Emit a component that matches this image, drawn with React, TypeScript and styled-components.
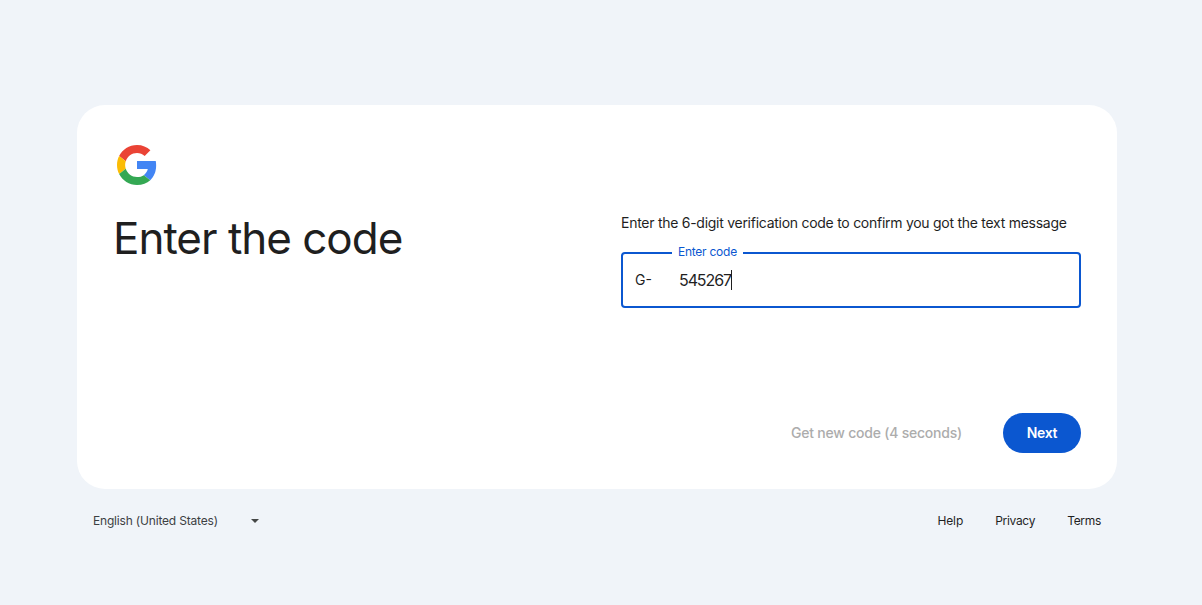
import { useState } from 'react';
import styled, { createGlobalStyle } from 'styled-components';

const GlobalStyle = createGlobalStyle`
  * {
    box-sizing: border-box;
  }

  body {
    margin: 0;
    background: #f0f4f9;
    color: #1f1f1f;
    font-family: Inter, Roboto, sans-serif;
  }
`;

const Page = styled.div({
  display: 'flex',
  flexDirection: 'column',
  width: 1040,
  minHeight: 605,
  marginLeft: 77,
  paddingTop: 105,
});

const Card = styled.main({
  display: 'flex',
  flexDirection: 'column',
  height: 384,
  padding: 36,
  borderRadius: 28,
  background: '#fff',
});

const Logo = styled.svg({
  display: 'block',
  width: 40,
  height: 40,
  margin: 4,
});

const Columns = styled.div({
  display: 'grid',
  gridTemplateColumns: '1fr 1fr',
  columnGap: 48,
  flex: 1,
});

const Title = styled.h1({
  margin: '23px 0 0',
  fontSize: 44,
  fontWeight: 400,
  lineHeight: '52px',
  letterSpacing: -1.02,
  whiteSpace: 'nowrap',
});

const Form = styled.form({
  paddingTop: 24,
});

const Instruction = styled.p({
  margin: 0,
  fontSize: 14,
  lineHeight: '20px',
  letterSpacing: -0.27,
  whiteSpace: 'nowrap',
});

const CodeField = styled.fieldset({
  display: 'flex',
  alignItems: 'center',
  position: 'relative',
  height: 56,
  margin: '19px 0 0',
  padding: '0 12px',
  border: '2px solid #0b57d0',
  borderRadius: 4,
});

const FieldLabel = styled.label({
  position: 'absolute',
  top: -10,
  left: 49,
  width: 71,
  padding: '0 6px',
  background: '#fff',
  color: '#0b57d0',
  fontSize: 12,
  lineHeight: '16px',
  letterSpacing: -0.25,
  whiteSpace: 'nowrap',
});

const Prefix = styled.span({
  width: 44,
  fontSize: 14,
  lineHeight: '20px',
  paddingBottom: 1,
});

const CodeValue = styled.span({
  fontSize: 16,
  lineHeight: '24px',
  letterSpacing: -1.1,
  paddingBottom: 1,
});

const Caret = styled.span({
  width: 1,
  height: 20,
  background: '#1f1f1f',
});

const Actions = styled.div({
  display: 'flex',
  alignItems: 'center',
  justifyContent: 'flex-end',
  gap: 41,
});

const ResendText = styled.span({
  color: '#acacac',
  fontSize: 14,
  fontWeight: 500,
  lineHeight: '20px',
  letterSpacing: -0.22,
});

const NextButton = styled.button({
  width: 78,
  height: 40,
  padding: 0,
  border: 0,
  borderRadius: 20,
  background: '#0b57d0',
  color: '#fff',
  fontFamily: 'inherit',
  fontSize: 14,
  fontWeight: 600,
  lineHeight: '20px',
  letterSpacing: -0.35,
});

const Footer = styled.footer({
  display: 'flex',
  alignItems: 'center',
  justifyContent: 'space-between',
  height: 64,
  padding: '0 16px',
  fontSize: 12,
  lineHeight: '16px',
});

const Language = styled.div({
  display: 'flex',
  alignItems: 'center',
  justifyContent: 'space-between',
  width: 166,
  color: '#3c4043',
  letterSpacing: -0.18,
});

const LanguageArrow = styled.svg({
  width: 8,
  height: 4,
  fill: '#444746',
});

const Links = styled.nav({
  display: 'flex',
  gap: 32,
});

const FooterLink = styled.a<{ $spacing: number }>((props) => ({
  color: '#1f1f1f',
  textDecoration: 'none',
  letterSpacing: props.$spacing,
}));

const links = [
  { label: 'Help', spacing: -0.1 },
  { label: 'Privacy', spacing: -0.3 },
  { label: 'Terms', spacing: -0.3 },
];

function GoogleLogo() {
  return (
    <Logo viewBox="0 0 48 48" aria-label="Google">
      <path fill="#EA4335" d="M24 9.5c3.54 0 6.71 1.22 9.21 3.6l6.85-6.85C35.9 2.38 30.47 0 24 0 14.62 0 6.51 5.38 2.56 13.22l7.98 6.19C12.43 13.72 17.74 9.5 24 9.5z" />
      <path fill="#4285F4" d="M46.98 24.55c0-1.97-.15-3.69-.48-5.35H24v9.6h12.94c-.58 2.76-2.26 5.28-4.78 7.39l7.73 6c4.51-4.18 7.09-10.36 7.09-17.64z" />
      <path fill="#FBBC05" d="M10.53 28.59c-.48-1.45-.76-2.99-.76-4.59s.27-3.14.76-4.59l-7.98-6.19C.92 16.46 0 20.12 0 24c0 3.88.92 7.54 2.56 10.78l7.97-6.19z" />
      <path fill="#34A853" d="M24 48c6.48 0 11.93-2.13 15.89-5.81l-7.73-6c-2.15 1.45-4.92 2.3-8.16 2.3-6.26 0-11.57-4.22-13.47-9.91l-7.98 6.19C6.51 42.62 14.62 48 24 48z" />
    </Logo>
  );
}

function App() {
  const [code] = useState('545267');

  return (
    <>
      <GlobalStyle />
      <Page>
        <Card>
          <GoogleLogo />
          <Columns>
            <Title>Enter the code</Title>
            <Form>
              <Instruction>Enter the 6-digit verification code to confirm you got the text message</Instruction>
              <CodeField>
                <FieldLabel>Enter code</FieldLabel>
                <Prefix>G-</Prefix>
                <CodeValue>{code}</CodeValue>
                <Caret />
              </CodeField>
            </Form>
          </Columns>
          <Actions>
            <ResendText>Get new code (4 seconds)</ResendText>
            <NextButton type="button">Next</NextButton>
          </Actions>
        </Card>
        <Footer>
          <Language>
            English (United States)
            <LanguageArrow viewBox="0 0 8 4">
              <path d="M0 0h8L4 4z" />
            </LanguageArrow>
          </Language>
          <Links>
            {links.map((link) => (
              <FooterLink key={link.label} $spacing={link.spacing}>{link.label}</FooterLink>
            ))}
          </Links>
        </Footer>
      </Page>
    </>
  );
}

export default App;
